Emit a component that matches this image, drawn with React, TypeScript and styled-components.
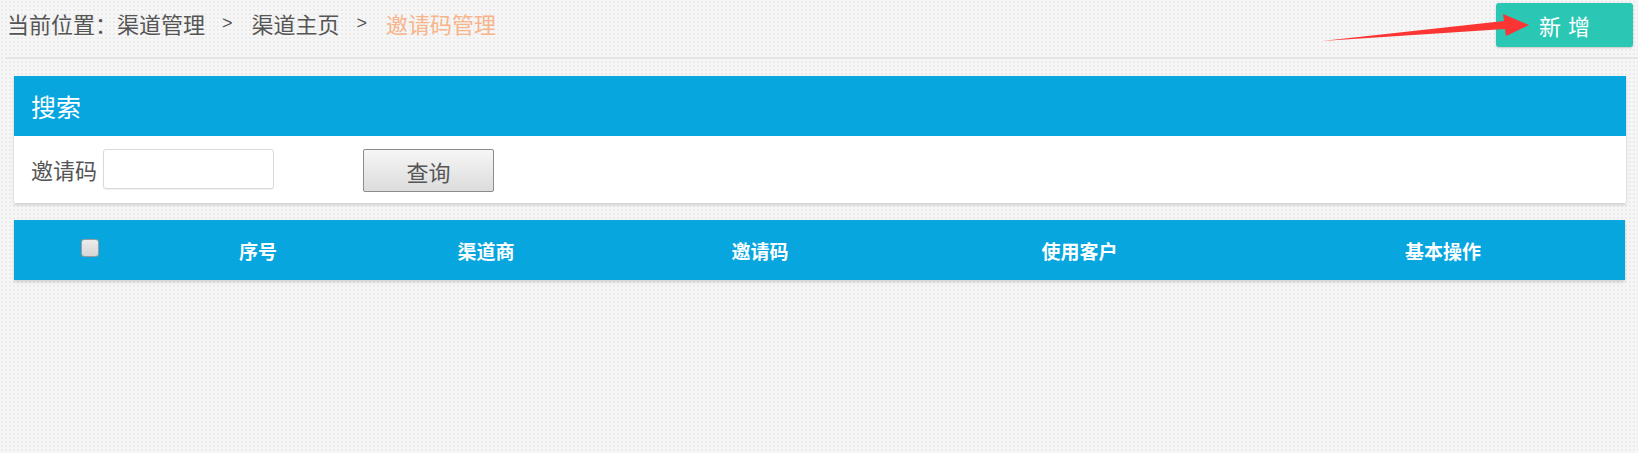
import React from "react";
import styled, { createGlobalStyle } from "styled-components";

const Global = createGlobalStyle`
  html, body {
    margin: 0;
    padding: 0;
  }
  body {
    background-color: #f6f6f6;
    background-image: radial-gradient(circle, #ebebeb 1px, transparent 1.2px);
    background-size: 4px 4px;
    font-family: "Noto Sans CJK SC", "Noto Sans", sans-serif;
    color: #555;
  }
`;

const Page = styled.div`
  position: relative;
  width: 1638px;
  min-height: 453px;
  box-sizing: border-box;
`;

const TopBar = styled.div`
  display: flex;
  justify-content: space-between;
  align-items: flex-start;
  height: 59px;
  margin-left: 6px;
  padding: 3px 5px 0 1px;
  box-sizing: border-box;
  border-bottom: 2px solid #e4e4e4;
`;

const Crumbs = styled.div`
  display: flex;
  align-items: center;
  font-size: 22px;
  line-height: 40px;
  color: #555;
  white-space: nowrap;
`;

const Sep = styled.span`
  font-family: "Liberation Sans", Arial, sans-serif;
  font-size: 18px;
  margin: 0 19px 0 17px;
  color: #555;
`;

const Crumb = styled.span<{ $active?: boolean }>`
  color: ${(p) => (p.$active ? "#f8b48a" : "#555")};
`;

const AddButton = styled.button`
  width: 137px;
  height: 44px;
  border: none;
  border-radius: 3px;
  background: #2bc7b5;
  color: #fff;
  font-family: inherit;
  font-size: 22px;
  word-spacing: 2px;
  padding: 0;
  box-shadow: 0 1px 2px rgba(0, 0, 0, 0.2);
  cursor: pointer;
`;

const Content = styled.div`
  display: flex;
  flex-direction: column;
  gap: 17px;
  padding: 17px 12px 0 14px;
`;

const Card = styled.div`
  background: #fff;
  box-shadow: 0 2px 3px rgba(0, 0, 0, 0.16);
`;

const CardHead = styled.div`
  height: 60px;
  background: #07a6df;
  color: #fff;
  font-size: 25px;
  display: flex;
  align-items: center;
  padding-left: 17px;
`;

const CardBody = styled.div`
  height: 67px;
  display: flex;
  align-items: flex-start;
  padding: 13px 0 0 17px;
  box-sizing: border-box;
`;

const Label = styled.label`
  font-size: 22px;
  line-height: 40px;
  color: #555;
  margin-right: 6px;
`;

const TextInput = styled.input`
  width: 171px;
  height: 40px;
  box-sizing: border-box;
  border: 1px solid #dadada;
  border-radius: 3px;
  box-shadow: 0 1px 1px rgba(0, 0, 0, 0.06);
  outline: none;
`;

const QueryButton = styled.button`
  margin-left: 89px;
  width: 131px;
  height: 43px;
  box-sizing: border-box;
  border: 1px solid #8c8c8c;
  border-radius: 2px;
  background: linear-gradient(#f6f6f6, #dcdcdc);
  font-family: inherit;
  font-size: 22px;
  color: #555;
  padding: 0;
  cursor: pointer;
`;

const TableHead = styled.div`
  height: 60px;
  width: 1611px;
  background: #07a6df;
  box-shadow: 0 2px 3px rgba(0, 0, 0, 0.16);
  display: grid;
  grid-template-columns: 152px 184px 272px 276px 363px 1fr;
  align-items: center;
  color: #fff;
  font-weight: bold;
  font-size: 19px;
`;

const Th = styled.div`
  display: flex;
  justify-content: center;
`;

const Check = styled.input`
  appearance: none;
  -webkit-appearance: none;
  margin: -5px 0 0 0;
  width: 18px;
  height: 18px;
  border: 1px solid #9a9a9a;
  border-radius: 3px;
  background: linear-gradient(#ececec, #d6d6d6);
  box-sizing: border-box;
`;

const ArrowSvg = styled.svg`
  position: absolute;
  left: 0;
  top: 0;
  pointer-events: none;
`;

export default function App() {
  return (
    <>
      <Global />
      <Page>
        <TopBar>
          <Crumbs>
            <Crumb>当前位置：渠道管理</Crumb>
            <Sep>&gt;</Sep>
            <Crumb>渠道主页</Crumb>
            <Sep>&gt;</Sep>
            <Crumb $active>邀请码管理</Crumb>
          </Crumbs>
          <AddButton>新 增</AddButton>
        </TopBar>
        <Content>
          <Card>
            <CardHead>搜索</CardHead>
            <CardBody>
              <Label>邀请码</Label>
              <TextInput type="text" />
              <QueryButton>查询</QueryButton>
            </CardBody>
          </Card>
          <TableHead>
            <Th>
              <Check type="checkbox" />
            </Th>
            <Th>序号</Th>
            <Th>渠道商</Th>
            <Th>邀请码</Th>
            <Th>使用客户</Th>
            <Th>基本操作</Th>
          </TableHead>
        </Content>
        <ArrowSvg width="1638" height="60" viewBox="0 0 1638 60">
          <polygon
            points="1322,41 1504,21 1503,14 1529,25 1506,36 1505,29"
            fill="#fb3434"
          />
        </ArrowSvg>
      </Page>
    </>
  );
}
